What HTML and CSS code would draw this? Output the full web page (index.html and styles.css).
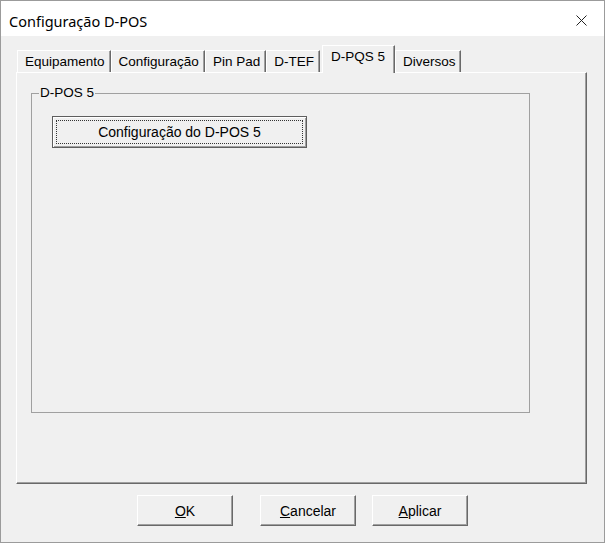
FILE: index.html
```html
<!DOCTYPE html>
<html lang="pt">
<head>
<meta charset="utf-8">
<title>Configuração D-POS</title>
<link rel="stylesheet" href="styles.css">
</head>
<body>
<div class="window">
  <div class="titlebar">
    <span class="title">Configuração D-POS</span>
    <svg class="close" width="11" height="11" viewBox="0 0 11 11"><path d="M0.5 0.5 L10.5 10.5 M10.5 0.5 L0.5 10.5" stroke="#222" stroke-width="1" fill="none"/></svg>
  </div>
  <div class="client">
    <div class="tabs">
      <div class="tabstrip">
        <div class="tab">Equipamento</div>
        <div class="tab">Configuração</div>
        <div class="tab">Pin Pad</div>
        <div class="tab">D-TEF</div>
        <div class="tab selected">D-PQS 5</div>
        <div class="tab">Diversos</div>
      </div>
      <div class="panel">
        <fieldset class="group">
          <legend class="group-label">D-POS 5</legend>
          <button class="btn big" type="button"><span class="focus">Configuração do D-POS 5</span></button>
        </fieldset>
      </div>
    </div>
    <div class="actions">
      <button class="btn action ok" type="button"><span><u>O</u>K</span></button>
      <button class="btn action cancel" type="button"><span><u>C</u>ancelar</span></button>
      <button class="btn action apply" type="button"><span><u>A</u>plicar</span></button>
    </div>
  </div>
</div>
</body>
</html>
```
FILE: styles.css
```css
html, body {
  margin: 0;
  padding: 0;
  background: #ffffff;
}

body {
  font-family: "Liberation Sans", Arial, sans-serif;
  color: #000;
}

.window {
  width: 605px;
  height: 543px;
  box-sizing: border-box;
  border: 1px solid #9b9b9b;
  display: flex;
  flex-direction: column;
  background: #f0f0f0;
}

.titlebar {
  height: 35px;
  box-sizing: border-box;
  background: #ffffff;
  display: flex;
  align-items: flex-start;
  padding: 11px 17px 0 8px;
}

.title {
  font-family: "Noto Sans", "Open Sans", sans-serif;
  font-size: 14.5px;
  line-height: 19px;
  color: #000;
}

.close {
  margin-left: auto;
  margin-top: 3px;
  display: block;
}

.client {
  flex: 1;
  display: flex;
  flex-direction: column;
  padding: 11px 17px 0 15px;
}

.tabs {
  display: flex;
  flex-direction: column;
}

.tabstrip {
  display: flex;
  align-items: flex-end;
  padding-left: 1px;
  height: 26px;
  margin-bottom: -1px;
}

.tab {
  font-size: 13.5px;
  line-height: 22px;
  height: 23px;
  box-sizing: border-box;
  padding: 0 5px 0 7px;
  border-top: 1px solid #ffffff;
  border-left: 1px solid #ffffff;
  border-right: 1px solid #696969;
  box-shadow: inset -1px 0 0 #a0a0a0;
  background: #f0f0f0;
  white-space: nowrap;
}

.tab.selected {
  height: 28px;
  padding: 0 9px 4px 8px;
  margin: 0 0 0 2px;
  position: relative;
  z-index: 1;
}

.panel {
  height: 412px;
  box-sizing: border-box;
  border-top: 1px solid #ffffff;
  border-left: 1px solid #ffffff;
  border-right: 1px solid #696969;
  border-bottom: 1px solid #696969;
  box-shadow: inset -1px -1px 0 #a0a0a0;
  padding: 12px 0 0 14px;
}

.group {
  margin: 0;
  padding: 0 0 0 20px;
  width: 499px;
  height: 328px;
  box-sizing: border-box;
  border: 1px solid #a0a0a0;
  min-width: 0;
}

.group-label {
  font-size: 13.5px;
  line-height: 16px;
  padding: 0 1px;
  margin-left: -13px;
}

.btn {
  font-family: "Liberation Sans", Arial, sans-serif;
  font-size: 14px;
  color: #000;
  background: #f0f0f0;
  box-sizing: border-box;
  border: 1px solid;
  border-color: #ffffff #696969 #696969 #ffffff;
  box-shadow: inset -1px -1px 0 #a0a0a0;
  padding: 0;
  display: flex;
  align-items: center;
  justify-content: center;
}

.btn.big {
  width: 255px;
  height: 32px;
  margin-top: 15px;
  border-color: #5e5e5e;
  box-shadow: inset 1px 1px 0 #ffffff, inset -1px -1px 0 #a0a0a0;
  padding: 3px;
}

.focus {
  flex: 1;
  align-self: stretch;
  border: 1px dotted #333;
  display: flex;
  align-items: center;
  justify-content: center;
}

.actions {
  display: flex;
  padding-left: 121px;
  margin-top: 11px;
}

.btn.action {
  width: 96px;
  height: 31px;
}

.btn.cancel {
  margin-left: 27px;
}

.btn.apply {
  margin-left: 16px;
}
```
